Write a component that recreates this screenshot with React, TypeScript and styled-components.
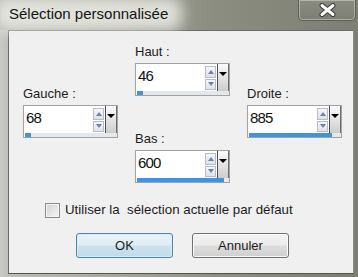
import React from 'react';
import styled, { createGlobalStyle } from 'styled-components';

const GlobalStyle = createGlobalStyle`
  html, body {
    margin: 0;
    padding: 0;
    background: #c4c4c0;
  }
  body {
    font-family: 'Liberation Sans', Arial, sans-serif;
    overflow: hidden;
  }
`;

const Window = styled.div`
  width: 358px;
  height: 277px;
  display: flex;
  flex-direction: column;
  background: linear-gradient(90deg, #c9c9c6 0px, #bdbdb9 8px, #8f9085 60%, #7d7e73 100%);
  overflow: hidden;
`;

const TitleBar = styled.div`
  height: 30px;
  flex: none;
  display: flex;
  align-items: flex-start;
  background: linear-gradient(90deg, #b4b4ad 0%, #a3a499 30%, #8c8d81 60%, #7e7f74 100%);
`;

const Title = styled.div`
  position: relative;
  margin: 5px 0 0 9px;
  font-size: 15px;
  line-height: 18px;
  color: #151515;
  z-index: 0;

  &::before {
    content: '';
    position: absolute;
    left: -14px;
    right: -14px;
    top: -8px;
    bottom: -8px;
    background: rgba(236, 236, 232, 0.85);
    filter: blur(7px);
    border-radius: 12px;
    z-index: -1;
  }
`;

const CloseButton = styled.div`
  margin-left: auto;
  margin-right: 2px;
  width: 56px;
  height: 20px;
  border: 1px solid #5e5f58;
  border-top: none;
  border-radius: 0 0 5px 5px;
  box-shadow: inset 0 0 0 1px rgba(230, 230, 220, 0.45);
  background: linear-gradient(#8a8b81, #7c7d73);
  display: flex;
  align-items: center;
  justify-content: center;
`;

const Frame = styled.div`
  flex: 1;
  display: flex;
  padding: 0 4px 3px 8px;
`;

const Client = styled.div`
  flex: 1;
  background: #f0f0f0;
  border: 1px solid #6a6a68;
  border-right-color: #8d8d88;
  border-bottom-color: #55554f;
  display: flex;
  flex-direction: column;
`;

const Fields = styled.div`
  display: grid;
  grid-template-columns: 95px 95px 95px;
  column-gap: 17px;
  padding: 13px 0 0 14px;
`;

const SideColumn = styled.div`
  align-self: center;
  margin-top: -3px;
`;

const MiddleColumn = styled.div`
  display: flex;
  flex-direction: column;
  gap: 35px;
`;

const Label = styled.div`
  font-size: 13px;
  line-height: 15px;
  color: #1c1c1c;
  margin-bottom: 4px;
`;

const SpinBox = styled.div`
  height: 31px;
  border: 1px solid #a2a2a2;
  background: #fff;
  display: flex;
  flex-direction: column;
`;

const SpinRow = styled.div`
  flex: 1;
  display: flex;
`;

const ValueText = styled.div`
  flex: 1;
  padding: 3px 0 0 2px;
  font-size: 15px;
  line-height: 17px;
  letter-spacing: -0.9px;
  color: #111;
`;

const Arrows = styled.div`
  width: 11px;
  display: flex;
  flex-direction: column;
  gap: 1px;
  padding: 2px 1px 1px 0;
`;

const ArrowButton = styled.div`
  flex: 1;
  border: 1px solid #b7bccb;
  background: linear-gradient(#f6f7fa, #dde1ea);
  display: flex;
  align-items: center;
  justify-content: center;
`;

const DropButton = styled.div`
  width: 12px;
  border-left: 1px solid #4e4e4e;
  border-right: 1px solid #6f6f6f;
  background: linear-gradient(#fbfbfb, #e6e6e6 45%, #cdcdcd);
  display: flex;
  justify-content: center;
  padding-top: 8px;
  box-sizing: border-box;
`;

const Track = styled.div`
  height: 4px;
  margin: 0 0 0 1px;
  background: #e2e8ee;
`;

const TrackFill = styled.div<{ fill: number }>`
  height: 100%;
  width: ${props => props.fill}%;
  background: #3d93e6;
`;

const CheckRow = styled.div`
  display: flex;
  align-items: center;
  gap: 5px;
  margin: 19px 0 0 36px;
  font-size: 13.3px;
  line-height: 16px;
  color: #1c1c1c;
  white-space: pre;
`;

const CheckBox = styled.div`
  width: 13px;
  height: 13px;
  border: 1px solid #8b8b8b;
  background: linear-gradient(135deg, #d2d2d2, #f4f4f4);
  box-shadow: inset 0 0 0 1px #f4f4f4;
`;

const ButtonRow = styled.div`
  display: flex;
  gap: 19px;
  margin: 15px 0 0 67px;
`;

const Button = styled.div<{ primary?: boolean }>`
  width: 95px;
  height: 23px;
  border: 1px solid ${props => (props.primary ? '#4d87ab' : '#707070')};
  border-radius: 3px;
  background: ${props =>
    props.primary
      ? 'linear-gradient(#eaf3f8, #dfedf5 48%, #cde2ee 52%, #c2dbe9)'
      : 'linear-gradient(#f3f3f3, #ebebeb 48%, #dddddd 52%, #cfcfcf)'};
  box-shadow: inset 0 0 0 1px ${props => (props.primary ? '#d4ebf7' : '#fbfbfb')};
  display: flex;
  align-items: center;
  justify-content: center;
  font-size: 13px;
  color: #1c1c1c;
`;

const Triangle = ({ up, color, w, h }: { up?: boolean; color: string; w: number; h: number }) => (
  <svg width={w} height={h} viewBox={`0 0 ${w} ${h}`}>
    <polygon points={up ? `0,${h} ${w / 2},0 ${w},${h}` : `0,0 ${w},0 ${w / 2},${h}`} fill={color} />
  </svg>
);

type FieldProps = { label: string; value: number; fill: number };

const Field = ({ label, value, fill }: FieldProps) => (
  <div>
    <Label>{label}</Label>
    <SpinBox>
      <SpinRow>
        <ValueText>{value}</ValueText>
        <Arrows>
          <ArrowButton>
            <Triangle up color="#7080a8" w={6} h={4} />
          </ArrowButton>
          <ArrowButton>
            <Triangle color="#7080a8" w={6} h={4} />
          </ArrowButton>
        </Arrows>
        <DropButton>
          <Triangle color="#000" w={8} h={4} />
        </DropButton>
      </SpinRow>
      <Track>
        <TrackFill fill={fill} />
      </Track>
    </SpinBox>
  </div>
);

export default function App() {
  return (
    <>
      <GlobalStyle />
      <Window>
        <TitleBar>
          <Title>Sélection personnalisée</Title>
          <CloseButton>
            <svg width="17" height="14" viewBox="0 0 17 14">
              <path d="M3 2.5 L14 11.5 M14 2.5 L3 11.5" stroke="#3a3a36" strokeWidth="5" strokeLinecap="round" />
              <path d="M3 2.5 L14 11.5 M14 2.5 L3 11.5" stroke="#ffffff" strokeWidth="3" strokeLinecap="round" />
            </svg>
          </CloseButton>
        </TitleBar>
        <Frame>
          <Client>
            <Fields>
              <SideColumn>
                <Field label="Gauche :" value={68} fill={7} />
              </SideColumn>
              <MiddleColumn>
                <Field label="Haut :" value={46} fill={6} />
                <Field label="Bas :" value={600} fill={95} />
              </MiddleColumn>
              <SideColumn>
                <Field label="Droite :" value={885} fill={90} />
              </SideColumn>
            </Fields>
            <CheckRow>
              <CheckBox />
              {'Utiliser la  sélection actuelle par défaut'}
            </CheckRow>
            <ButtonRow>
              <Button primary>OK</Button>
              <Button>Annuler</Button>
            </ButtonRow>
          </Client>
        </Frame>
      </Window>
    </>
  );
}
